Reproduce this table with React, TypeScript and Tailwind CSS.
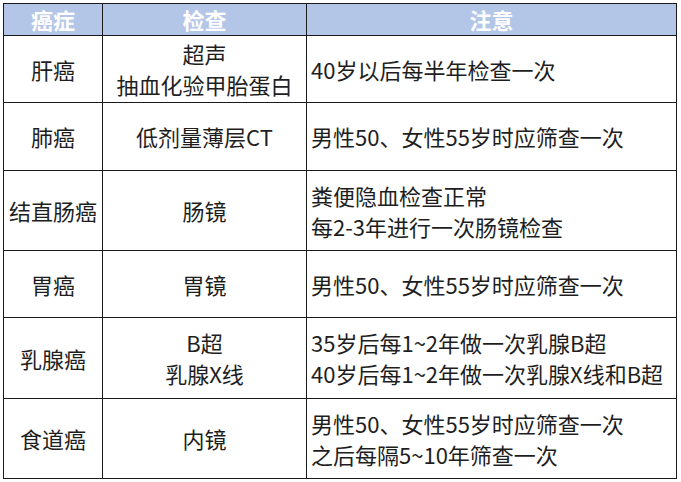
import React from "react";

const rows: { name: string; exam: string[]; note: string[]; h: string }[] = [
  { name: "肝癌", exam: ["超声", "抽血化验甲胎蛋白"], note: ["40岁以后每半年检查一次"], h: "h-[66px]" },
  { name: "肺癌", exam: ["低剂量薄层CT"], note: ["男性50、女性55岁时应筛查一次"], h: "h-[67px]" },
  { name: "结直肠癌", exam: ["肠镜"], note: ["粪便隐血检查正常", "每2-3年进行一次肠镜检查"], h: "h-[79px]" },
  { name: "胃癌", exam: ["胃镜"], note: ["男性50、女性55岁时应筛查一次"], h: "h-[66px]" },
  { name: "乳腺癌", exam: ["B超", "乳腺X线"], note: ["35岁后每1~2年做一次乳腺B超", "40岁后每1~2年做一次乳腺X线和B超"], h: "h-[80px]" },
  { name: "食道癌", exam: ["内镜"], note: ["男性50、女性55岁时应筛查一次", "之后每隔5~10年筛查一次"], h: "h-[79px]" },
];

export default function App() {
  return (
    <div
      className="w-[681px] h-[482px] bg-white pl-[3px] pt-[3px]"
      style={{ fontFamily: '"Noto Sans CJK SC", "Noto Sans", sans-serif' }}
    >
      <div className="grid grid-cols-[98px_203px_369px] gap-px bg-[#1a1a1a] p-px w-[674px] text-[22px] leading-[31px] text-[#1e1e1e]">
        <div className="h-[31px] bg-[#b4c6e7] text-white font-bold flex items-center justify-center">癌症</div>
        <div className="h-[31px] bg-[#b4c6e7] text-white font-bold flex items-center justify-center">检查</div>
        <div className="h-[31px] bg-[#b4c6e7] text-white font-bold flex items-center justify-center">注意</div>
        {rows.map((r) => (
          <React.Fragment key={r.name}>
            <div className={`${r.h} bg-white flex items-center justify-center whitespace-nowrap`}>{r.name}</div>
            <div className={`${r.h} bg-white flex flex-col items-center justify-center whitespace-nowrap`}>
              {r.exam.map((e) => (
                <div key={e}>{e}</div>
              ))}
            </div>
            <div className={`${r.h} bg-white flex flex-col justify-center pl-[4px] whitespace-nowrap`}>
              {r.note.map((n) => (
                <div key={n}>{n}</div>
              ))}
            </div>
          </React.Fragment>
        ))}
      </div>
    </div>
  );
}
